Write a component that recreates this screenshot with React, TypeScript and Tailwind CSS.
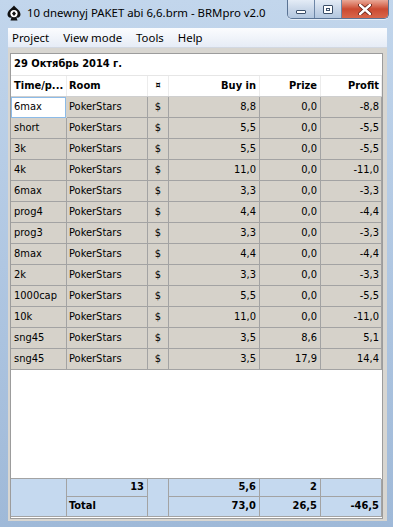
import React from "react";

type Row = {
  name: string;
  buyIn: string;
  prize: string;
  profit: string;
};

const rows: Row[] = [
  { name: "6max", buyIn: "8,8", prize: "0,0", profit: "-8,8" },
  { name: "short", buyIn: "5,5", prize: "0,0", profit: "-5,5" },
  { name: "3k", buyIn: "5,5", prize: "0,0", profit: "-5,5" },
  { name: "4k", buyIn: "11,0", prize: "0,0", profit: "-11,0" },
  { name: "6max", buyIn: "3,3", prize: "0,0", profit: "-3,3" },
  { name: "prog4", buyIn: "4,4", prize: "0,0", profit: "-4,4" },
  { name: "prog3", buyIn: "3,3", prize: "0,0", profit: "-3,3" },
  { name: "8max", buyIn: "4,4", prize: "0,0", profit: "-4,4" },
  { name: "2k", buyIn: "3,3", prize: "0,0", profit: "-3,3" },
  { name: "1000cap", buyIn: "5,5", prize: "0,0", profit: "-5,5" },
  { name: "10k", buyIn: "11,0", prize: "0,0", profit: "-11,0" },
  { name: "sng45", buyIn: "3,5", prize: "8,6", profit: "5,1" },
  { name: "sng45", buyIn: "3,5", prize: "17,9", profit: "14,4" },
];

const menuItems = ["Project", "View mode", "Tools", "Help"];

const cols = "grid grid-cols-[56px_81px_21px_91px_61px_61px]";

const AppIcon = () => (
  <svg width="16" height="16" viewBox="0 0 16 16">
    <path
      d="M8 0.5 C10 3 14.5 5.5 14.5 9.5 C14.5 12 12.5 13 10.5 12.5 L11.5 15.5 H4.5 L5.5 12.5 C3.5 13 1.5 12 1.5 9.5 C1.5 5.5 6 3 8 0.5 Z"
      fill="#111"
    />
    <circle cx="8" cy="8.6" r="3.6" fill="#fff" />
    <path d="M8 6.2 L10 8.6 L8 11 L6 8.6 Z" fill="#111" />
  </svg>
);

const TitleButtons = () => (
  <div className="flex h-[19px] self-start rounded-b-[5px] border border-t-0 border-[#5a7394] overflow-hidden shadow-[0_1px_0_rgba(255,255,255,0.6)]">
    <div className="w-[27px] flex items-center justify-center bg-gradient-to-b from-[#e4ecf6] via-[#c9d7e9] to-[#b3c7df] border-r border-[#6d86a6]">
      <div className="w-[10px] h-[4px] mt-[5px] bg-white border border-[#3b4f69] rounded-[1px]" />
    </div>
    <div className="w-[27px] flex items-center justify-center bg-gradient-to-b from-[#e4ecf6] via-[#c9d7e9] to-[#b3c7df] border-r border-[#6d86a6]">
      <div className="w-[10px] h-[9px] bg-white border border-[#3b4f69] rounded-[1px] flex items-center justify-center">
        <div className="w-[4px] h-[3px] border border-[#3b4f69]" />
      </div>
    </div>
    <div className="w-[46px] flex items-center justify-center bg-gradient-to-b from-[#e9a897] via-[#cb4a31] to-[#d9664a]">
      <svg width="14" height="11" viewBox="0 0 14 11">
        <path d="M2 1 L12 10 M12 1 L2 10" stroke="#5a1a10" strokeWidth="4" strokeLinecap="round" />
        <path d="M2 1 L12 10 M12 1 L2 10" stroke="#fff" strokeWidth="2.4" strokeLinecap="round" />
      </svg>
    </div>
  </div>
);

export default function App() {
  return (
    <div className="w-[393px] h-[527px] flex flex-col overflow-hidden bg-gradient-to-b from-[#c2d6ec] via-[#b0c7e2] to-[#9fb9d8] pl-[8px] pr-[6px] pb-[6px] font-['Segoe_UI','Noto_Sans',sans-serif] text-black">
      {/* Title bar */}
      <div className="h-[28px] flex shrink-0 -ml-[2px] -mr-[2px]">
        <div className="flex items-center gap-[5px] h-[26px]">
          <AppIcon />
          <span className="text-[11.4px] text-black">10 dnewnyj PAKET abi 6,6.brm - BRMpro v2.0</span>
        </div>
        <div className="ml-auto">
          <TitleButtons />
        </div>
      </div>

      {/* Client area */}
      <div className="flex-1 flex flex-col bg-[#d8d6d1]">
        <div className="h-[20px] shrink-0 flex items-center gap-[14px] pl-[4px] bg-gradient-to-b from-[#fbfcfe] to-[#e6ecf6] border-b border-[#d2d8e2] text-[11.4px]">
          {menuItems.map((item) => (
            <span key={item}>{item}</span>
          ))}
        </div>

        <div className="flex-1 flex flex-col mt-[5px] mb-[2px] ml-[2px] mr-[4px] bg-white border border-[#9c9c9c] font-['Tahoma','DejaVu_Sans_Condensed',sans-serif] text-[11px]">
          {/* Date group row */}
          <div className="h-[22px] shrink-0 flex items-center pl-[3px] font-bold border-b border-[#e6e6e6]">
            29 Октябрь 2014 г.
          </div>

          {/* Header */}
          <div className={`${cols} h-[21px] shrink-0 font-bold border-b border-[#cfcfcf]`}>
            <div className="flex items-center px-[3px] border-r border-[#ececec] whitespace-nowrap">Time/p...</div>
            <div className="flex items-center px-[2px] border-r border-[#ececec]">Room</div>
            <div className="flex items-center justify-center border-r border-[#ececec] text-[9px]">¤</div>
            <div className="flex items-center justify-end px-[3px] border-r border-[#ececec]">Buy in</div>
            <div className="flex items-center justify-end px-[3px] border-r border-[#ececec]">Prize</div>
            <div className="flex items-center justify-end px-[2px] border-r border-[#ececec]">Profit</div>
          </div>

          {/* Data rows */}
          {rows.map((row, i) => (
            <div key={i} className={`${cols} h-[21px] shrink-0 bg-[#d6d2ca]`}>
              <div
                className={
                  i === 0
                    ? "flex items-center px-[2px] bg-white border border-[#8cbbe8] mr-[1px]"
                    : "flex items-center px-[3px] border-r border-b border-[#a3a3a3]"
                }
              >
                {row.name}
              </div>
              <div className="flex items-center px-[2px] border-r border-b border-[#a3a3a3]">PokerStars</div>
              <div className="flex items-center justify-center border-r border-b border-[#a3a3a3]">$</div>
              <div className="flex items-center justify-end px-[3px] border-r border-b border-[#a3a3a3]">{row.buyIn}</div>
              <div className="flex items-center justify-end px-[3px] border-r border-b border-[#a3a3a3]">{row.prize}</div>
              <div className="flex items-center justify-end px-[2px] border-r border-b border-[#a3a3a3]">{row.profit}</div>
            </div>
          ))}

          <div className="flex-1" />

          {/* Footer summary */}
          <div className="grid grid-cols-[56px_81px_21px_91px_61px_61px] grid-rows-[18px_20px] mr-[1px] mb-[1px] border-t border-[#a3a3a3] bg-[#c5d9ef] font-bold">
            <div className="row-span-2 border-r border-b border-[#a3a3a3]" />
            <div className="flex items-center justify-end px-[3px] border-r border-b border-[#a3a3a3]">13</div>
            <div className="row-span-2 border-r border-b border-[#a3a3a3]" />
            <div className="flex items-center justify-end px-[3px] border-r border-b border-[#a3a3a3]">5,6</div>
            <div className="flex items-center justify-end px-[3px] border-r border-b border-[#a3a3a3]">2</div>
            <div className="border-r border-b border-[#a3a3a3]" />
            <div className="flex items-center px-[2px] border-r border-b border-[#a3a3a3]">Total</div>
            <div className="flex items-center justify-end px-[3px] border-r border-b border-[#a3a3a3]">73,0</div>
            <div className="flex items-center justify-end px-[3px] border-r border-b border-[#a3a3a3]">26,5</div>
            <div className="flex items-center justify-end px-[2px] border-r border-b border-[#a3a3a3]">-46,5</div>
          </div>
        </div>
      </div>
    </div>
  );
}
